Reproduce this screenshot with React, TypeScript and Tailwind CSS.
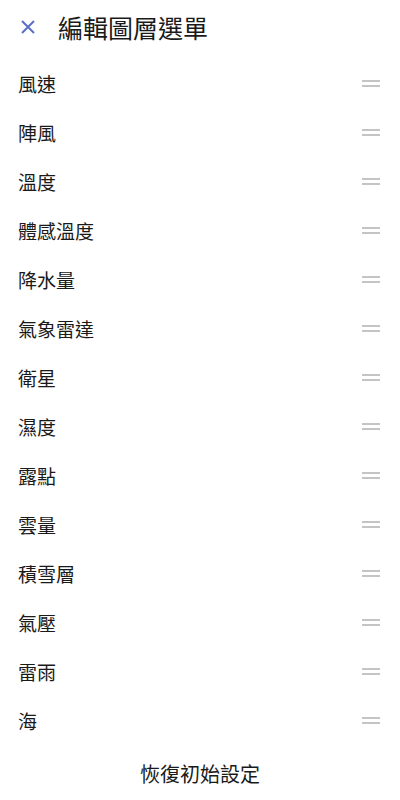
const layers = [
  "風速",
  "陣風",
  "溫度",
  "體感溫度",
  "降水量",
  "氣象雷達",
  "衛星",
  "濕度",
  "露點",
  "雲量",
  "積雪層",
  "氣壓",
  "雷雨",
  "海",
]

function DragHandle() {
  return (
    <div className="flex w-[18px] flex-col gap-[3px]">
      <div className="h-[2px] w-full bg-[#c4c4c4]" />
      <div className="h-[2px] w-full bg-[#c4c4c4]" />
    </div>
  )
}

export default function App() {
  return (
    <div
      className="flex h-[800px] w-[400px] flex-col bg-white text-[#1a1a1a]"
      style={{ fontFamily: '"Noto Sans CJK TC", "Noto Sans", sans-serif' }}
    >
      <header className="flex h-[54px] items-center pl-[20px]">
        <button type="button" className="flex h-[16px] w-[16px] items-center justify-center">
          <svg width="16" height="16" viewBox="0 0 16 16" fill="none">
            <path d="M2 2L14 14M14 2L2 14" stroke="#5b6fc9" strokeWidth="2" />
          </svg>
        </button>
        <h1 className="ml-[22px] text-[25px] leading-none">編輯圖層選單</h1>
      </header>
      <ul className="flex flex-col pt-[5px]">
        {layers.map((name) => (
          <li key={name} className="flex h-[49px] items-center justify-between pl-[18px] pr-[20px]">
            <span className="text-[19px] leading-none">{name}</span>
            <DragHandle />
          </li>
        ))}
      </ul>
      <div className="flex flex-1 items-center justify-center pt-[2px]">
        <button type="button" className="text-[20px] leading-none">
          恢復初始設定
        </button>
      </div>
    </div>
  )
}
